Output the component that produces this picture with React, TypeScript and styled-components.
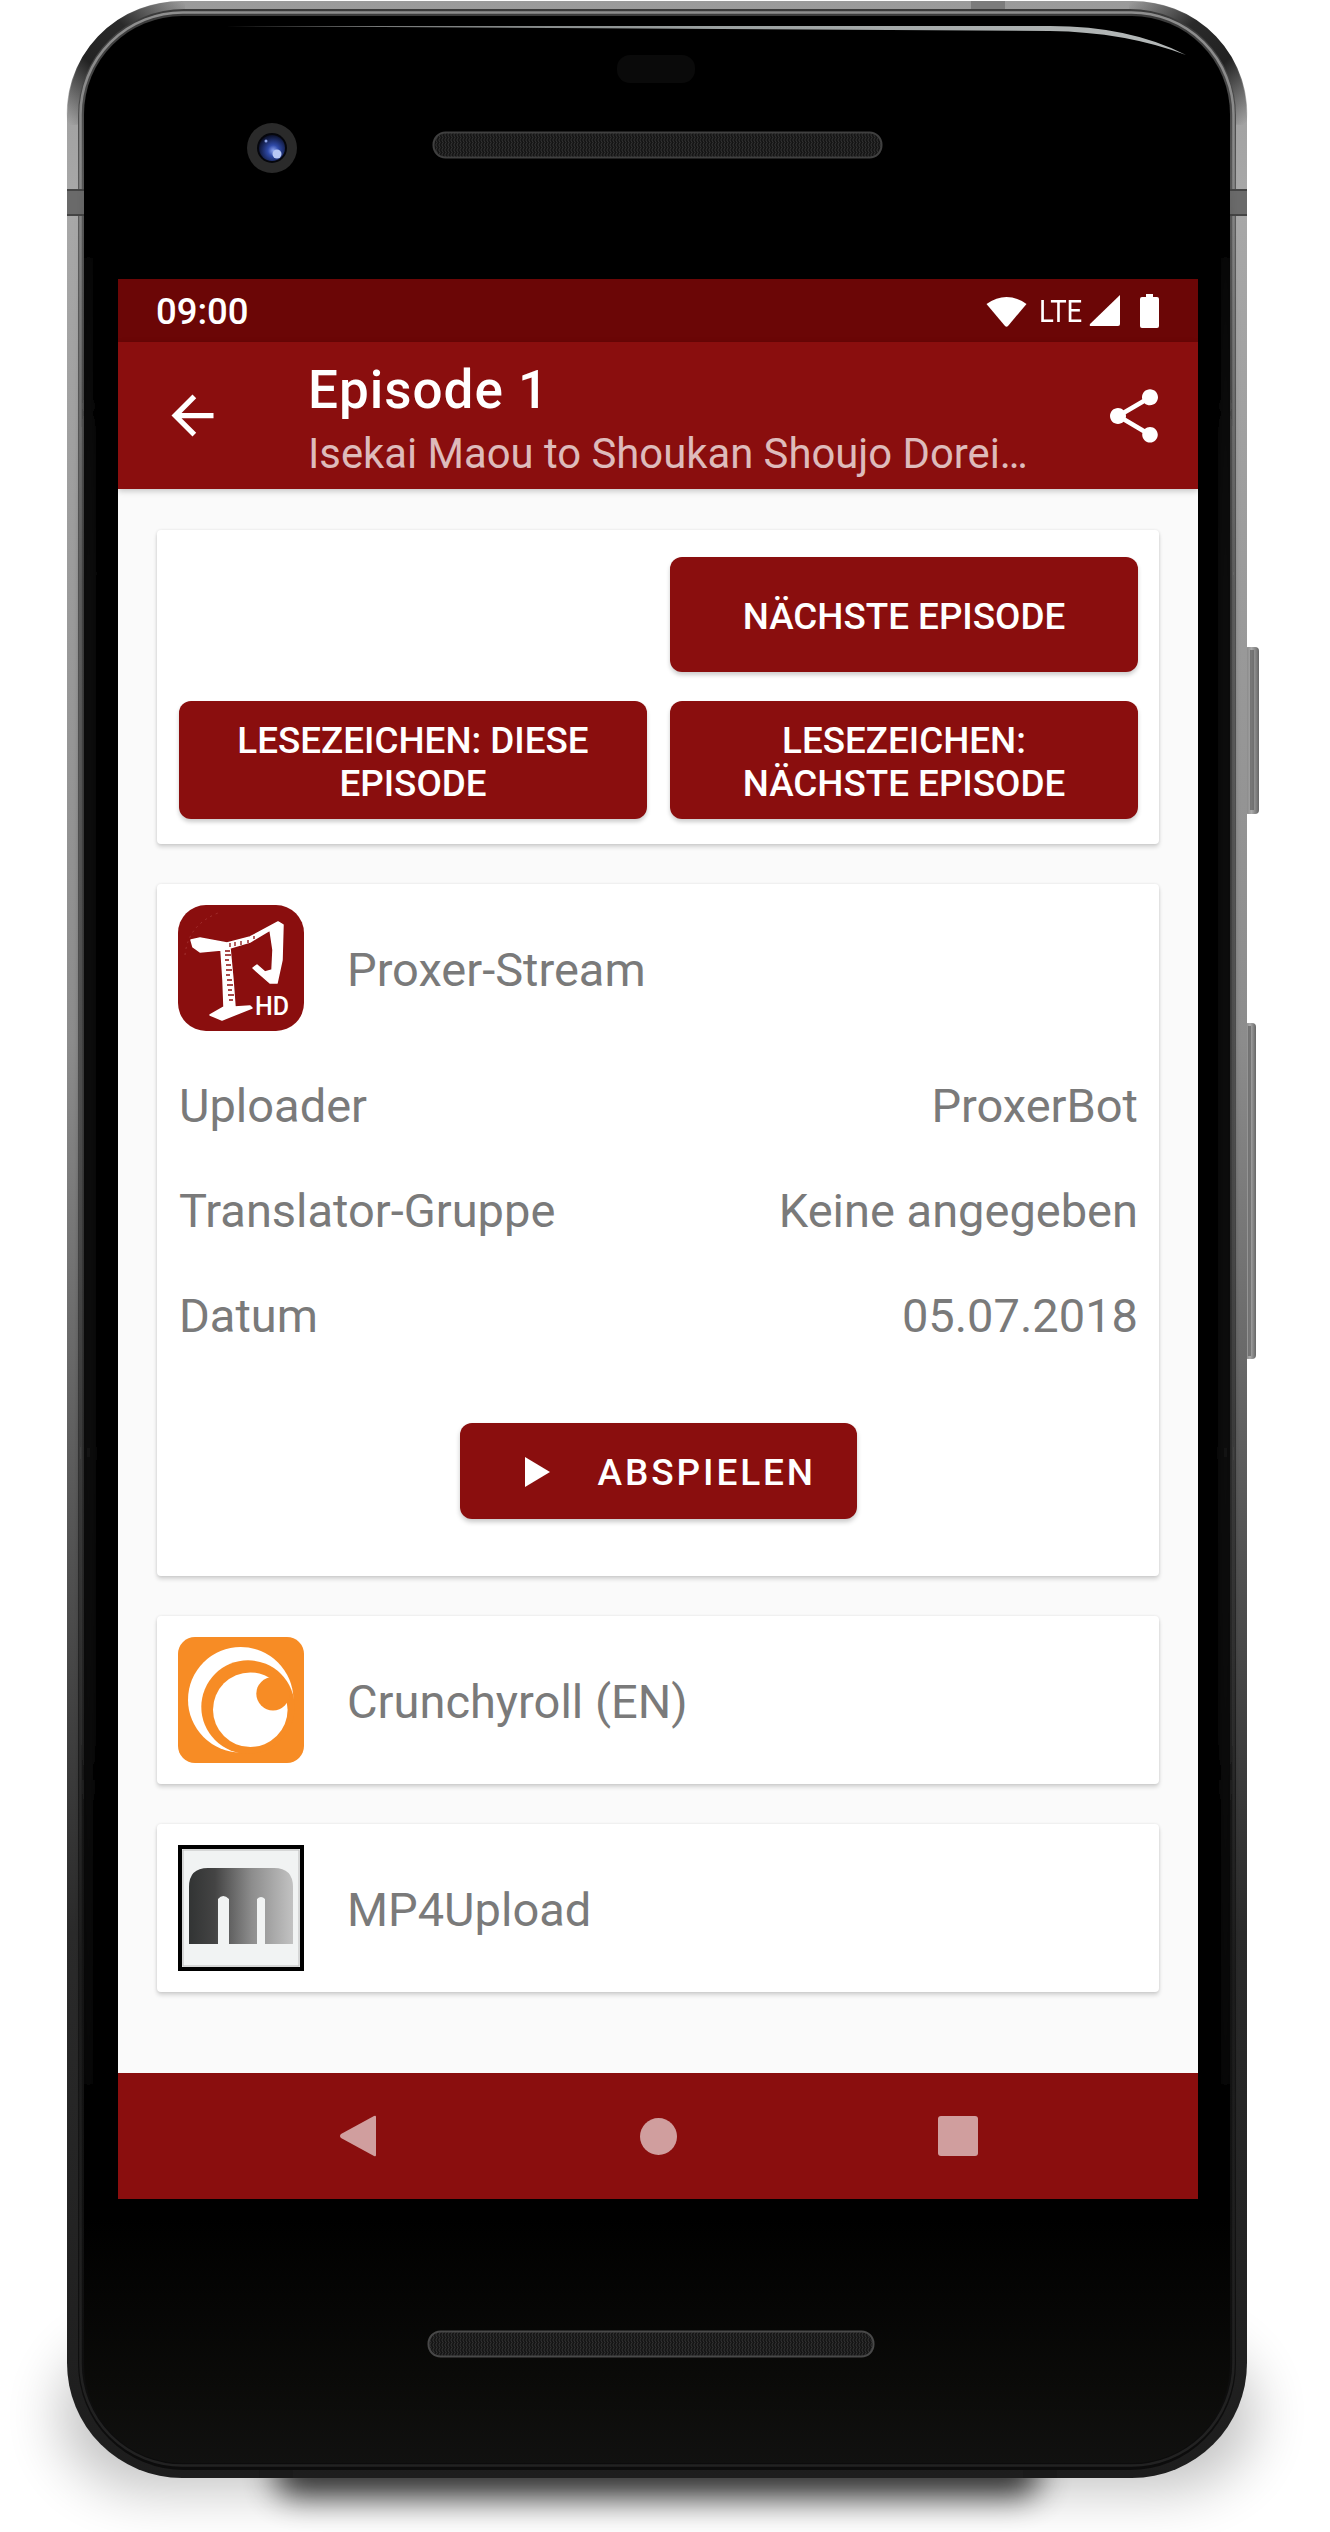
import React from "react";
import styled, { createGlobalStyle } from "styled-components";

const GlobalStyle = createGlobalStyle`
  html, body { margin: 0; padding: 0; background: #fff; }
  * { box-sizing: border-box; }
`;

const PRIMARY = "#8a0e0e";
const DARK = "#6b0606";
const GREY = "#7a7a7a";

const Page = styled.div`
  position: relative;
  width: 1330px;
  height: 2532px;
  padding: 279px 132px 333px 118px;
  overflow: hidden;
  font-family: Roboto, "Liberation Sans", sans-serif;
`;

const HardwareArt = styled.svg`
  position: absolute;
  inset: 0;
  width: 1330px;
  height: 2532px;
`;

const Screen = styled.main`
  position: relative;
  width: 1080px;
  height: 1920px;
  display: flex;
  flex-direction: column;
  background: #fafafa;
`;

const StatusBar = styled.div`
  height: 63px;
  flex: none;
  display: flex;
  align-items: center;
  justify-content: space-between;
  padding: 0 39px 0 38px;
  background: ${DARK};
  color: #fff;
`;

const Clock = styled.span`
  font-size: 36.5px;
  font-weight: 500;
  line-height: 42px;
  margin-top: 2px;
`;

const StatusIcons = styled.div`
  display: flex;
  align-items: center;
  height: 63px;
`;

const Lte = styled.span`
  display: inline-block;
  width: 42px;
  margin: 0 8px 0 12px;
  font-size: 32px;
  line-height: 36px;
  font-weight: 400;
  white-space: nowrap;
  transform: scaleX(0.86);
  transform-origin: left center;
`;

const Toolbar = styled.header`
  position: relative;
  height: 147px;
  flex: none;
  display: flex;
  align-items: center;
  padding: 0 32px 0 43px;
  background: ${PRIMARY};
  color: #fff;
  box-shadow: 0 2px 6px rgba(0, 0, 0, 0.22);
`;

const ToolbarText = styled.div`
  flex: 1;
  align-self: flex-start;
  min-width: 0;
  padding-top: 18px;
  margin-left: 84px;
`;

const Title = styled.div`
  font-size: 53px;
  line-height: 60px;
  font-weight: 500;
  letter-spacing: 1px;
`;

const Subtitle = styled.div`
  margin-top: 10px;
  font-size: 41.8px;
  line-height: 48px;
  color: rgba(255, 255, 255, 0.72);
  white-space: nowrap;
`;

const Content = styled.div`
  flex: 1;
  display: flex;
  flex-direction: column;
  gap: 40px;
  padding: 41px 39px 0;
`;

const Card = styled.section`
  background: #fff;
  border-radius: 4px;
  box-shadow: 0 3px 4px rgba(0, 0, 0, 0.16), 0 0 3px rgba(0, 0, 0, 0.09);
`;

const ActionsCard = styled(Card)`
  display: grid;
  grid-template-columns: 468px 468px;
  grid-template-rows: 115px 118px;
  column-gap: 23px;
  row-gap: 29px;
  padding: 27px 21px 25px 22px;
`;

const ActionButton = styled.button<{ $col?: number }>`
  grid-column: ${(p) => p.$col ?? "auto"};
  border: 0;
  margin: 0;
  padding: 4px 30px 0;
  border-radius: 12px;
  background: ${PRIMARY};
  color: #fff;
  font-family: inherit;
  font-size: 36.8px;
  font-weight: 500;
  line-height: 43.5px;
  box-shadow: 0 3px 4px rgba(0, 0, 0, 0.2);
`;

const SourceHeader = styled.div`
  display: flex;
  align-items: center;
  gap: 43px;
  padding: 21px;
`;

const SourceName = styled.span`
  margin-top: 3px;
  font-size: 47px;
  line-height: 56px;
  color: ${GREY};
`;

const LogoArt = styled.svg`
  width: 126px;
  height: 126px;
  flex: none;
  display: block;
`;

const DetailList = styled.dl`
  margin: 1px 0 0;
  padding: 0 21px 0 22px;
`;

const DetailRow = styled.div`
  height: 105px;
  display: flex;
  align-items: center;
  justify-content: space-between;
  font-size: 47px;
  color: ${GREY};
`;

const DetailTerm = styled.dt`
  margin: 0;
`;

const DetailValue = styled.dd`
  margin: 0;
`;

const PlayButton = styled.button`
  display: flex;
  align-items: center;
  gap: 48px;
  width: 397px;
  height: 96px;
  margin: 55px auto 57px;
  padding: 2px 0 0 65px;
  border: 0;
  border-radius: 12px;
  background: ${PRIMARY};
  color: #fff;
  font-family: inherit;
  font-size: 37px;
  font-weight: 500;
  letter-spacing: 2.9px;
  box-shadow: 0 3px 5px rgba(0, 0, 0, 0.22);
`;

const NavBar = styled.nav`
  height: 126px;
  flex: none;
  display: grid;
  grid-template-columns: repeat(3, 300px);
  justify-content: center;
  align-items: center;
  background: ${PRIMARY};
`;

const NavIcon = styled.svg`
  justify-self: center;
  display: block;
  fill: rgba(255, 255, 255, 0.6);
`;

const ToolIcon = styled.svg<{ $gap?: number }>`
  flex: none;
  display: block;
  fill: #fff;
  margin-left: ${(p) => p.$gap ?? 0}px;
`;

function Frame() {
  return (
    <HardwareArt viewBox="0 0 1330 2532" aria-hidden="true">
      <defs>
        <filter id="b30" x="-30%" y="-200%" width="160%" height="500%"><feGaussianBlur stdDeviation="28" /></filter>
        <filter id="b12" x="-30%" y="-200%" width="160%" height="500%"><feGaussianBlur stdDeviation="16" /></filter>
        <filter id="b6" x="-200%" y="-5%" width="500%" height="110%"><feGaussianBlur stdDeviation="5" /></filter>
        <linearGradient id="metal" x1="0" y1="0" x2="0" y2="1">
          <stop offset="0" stopColor="#9a9a9a" />
          <stop offset="0.08" stopColor="#a8a8a8" />
          <stop offset="0.42" stopColor="#8c8c8c" />
          <stop offset="0.6" stopColor="#5a5a5a" />
          <stop offset="0.78" stopColor="#2a2a2a" />
          <stop offset="1" stopColor="#1d1d1d" />
        </linearGradient>
        <linearGradient id="band" x1="0" y1="0" x2="0" y2="1">
          <stop offset="0" stopColor="#3a3a3a" />
          <stop offset="0.08" stopColor="#5c5c5c" />
          <stop offset="0.45" stopColor="#555" />
          <stop offset="0.72" stopColor="#1c1c1c" />
          <stop offset="1" stopColor="#0c0c0c" />
        </linearGradient>
        <linearGradient id="thin" x1="0" y1="0" x2="0" y2="1">
          <stop offset="0" stopColor="#8e8e8e" />
          <stop offset="0.5" stopColor="#5c5c5c" />
          <stop offset="0.8" stopColor="#1e1e1e" />
          <stop offset="1" stopColor="#222" />
        </linearGradient>
        <linearGradient id="inner" x1="0" y1="0" x2="0" y2="1">
          <stop offset="0" stopColor="#000" />
          <stop offset="0.9" stopColor="#000" />
          <stop offset="0.97" stopColor="#0b0b09" />
          <stop offset="1" stopColor="#111110" />
        </linearGradient>
        <linearGradient id="sideGlow" x1="0" y1="0" x2="0" y2="1">
          <stop offset="0" stopColor="#191919" stopOpacity="0" />
          <stop offset="0.2" stopColor="#191919" />
          <stop offset="0.6" stopColor="#191919" />
          <stop offset="1" stopColor="#191919" stopOpacity="0" />
        </linearGradient>
        <linearGradient id="hl" x1="0" y1="0" x2="1" y2="0">
          <stop offset="0" stopColor="#666" />
          <stop offset="0.5" stopColor="#9aa0a0" />
          <stop offset="1" stopColor="#b5b9b9" />
        </linearGradient>
        <linearGradient id="cornerL" gradientUnits="userSpaceOnUse" x1="70" y1="125" x2="185" y2="3">
          <stop offset="0" stopColor="#222" stopOpacity="0" />
          <stop offset="0.35" stopColor="#222" />
          <stop offset="0.65" stopColor="#2a2a2a" />
          <stop offset="1" stopColor="#2a2a2a" stopOpacity="0" />
        </linearGradient>
        <linearGradient id="cornerR" gradientUnits="userSpaceOnUse" x1="1244" y1="125" x2="1129" y2="3">
          <stop offset="0" stopColor="#222" stopOpacity="0" />
          <stop offset="0.35" stopColor="#222" />
          <stop offset="0.65" stopColor="#2a2a2a" />
          <stop offset="1" stopColor="#2a2a2a" stopOpacity="0" />
        </linearGradient>
        <linearGradient id="key" x1="0" y1="0" x2="1" y2="0">
          <stop offset="0" stopColor="#777" />
          <stop offset="0.5" stopColor="#aaa" />
          <stop offset="1" stopColor="#666" />
        </linearGradient>
        <pattern id="mesh" width="3" height="5" patternUnits="userSpaceOnUse">
          <rect width="3" height="5" fill="#151515" />
          <path d="M0.8 0 L2.2 2.5 L0.8 5" fill="none" stroke="#383838" strokeWidth="0.9" />
        </pattern>
        <radialGradient id="lens" cx="0.55" cy="0.6" r="0.6">
          <stop offset="0" stopColor="#8fa6f0" />
          <stop offset="0.35" stopColor="#2f4aa8" />
          <stop offset="1" stopColor="#0a0f28" />
        </radialGradient>
      </defs>

      {/* drop shadow */}
      <rect x="60" y="2340" width="1194" height="150" rx="90" fill="#000" opacity="0.24" filter="url(#b30)" />
      <rect x="275" y="2450" width="764" height="46" rx="20" fill="#000" opacity="0.8" filter="url(#b12)" />

      {/* side keys */}
      <rect x="1244" y="647" width="15" height="167" rx="4" fill="url(#key)" />
      <rect x="1250" y="650" width="4" height="160" fill="#555" opacity="0.6" />
      <rect x="1244" y="1023" width="12" height="336" rx="4" fill="url(#key)" />
      <rect x="1248" y="1026" width="3" height="330" fill="#555" opacity="0.6" />

      {/* body */}
      <rect x="67" y="1" width="1180" height="2477" rx="115" fill="url(#metal)" />
      <path d="M73 125 A108 108 0 0 1 185 7" fill="none" stroke="url(#cornerL)" strokeWidth="12" />
      <path d="M1241 125 A108 108 0 0 0 1129 7" fill="none" stroke="url(#cornerR)" strokeWidth="12" />

      {/* antenna bands */}
      <rect x="971" y="1" width="34" height="9" fill="#7c7c7c" />
      <rect x="259" y="2466" width="34" height="12" fill="#1a1a1a" />
      <rect x="1023" y="2466" width="34" height="12" fill="#1a1a1a" />

      <rect x="78" y="9" width="1158" height="2461" rx="106" fill="url(#band)" />
      <rect x="80.5" y="12.5" width="1153" height="2453" rx="102" fill="none" stroke="url(#thin)" strokeWidth="2.5" />

      {/* side antenna lines sit on the rim */}
      <rect x="67" y="189" width="17" height="27" fill="#6a6a6a" />
      <rect x="67" y="189" width="17" height="2" fill="#444" />
      <rect x="67" y="214" width="17" height="2" fill="#444" />
      <rect x="1230" y="189" width="17" height="27" fill="#6a6a6a" />
      <rect x="1230" y="189" width="17" height="2" fill="#444" />
      <rect x="1230" y="214" width="17" height="2" fill="#444" />

      <rect x="84" y="16" width="1146" height="2447" rx="98" fill="url(#inner)" />

      {/* inner glow at the sides */}
      <rect x="84" y="160" width="9" height="2120" fill="url(#sideGlow)" filter="url(#b6)" />
      <rect x="1221" y="160" width="9" height="2120" fill="url(#sideGlow)" filter="url(#b6)" />

      {/* glass highlight */}
      <path d="M225 26 L1050 26 Q1130 26 1186 55 Q1125 32 1050 31 Z" fill="url(#hl)" />

      {/* proximity sensor */}
      <rect x="617" y="55" width="78" height="28" rx="13" fill="#0a0a0a" />

      {/* camera */}
      <circle cx="272" cy="148" r="25" fill="#2a2a2a" />
      <circle cx="272" cy="148" r="15" fill="#05060c" />
      <circle cx="272" cy="148" r="13" fill="url(#lens)" />
      <circle cx="277" cy="154" r="4.5" fill="#b8c8f5" />
      <circle cx="266" cy="141" r="1.5" fill="#8ea4e6" />

      {/* speakers */}
      <rect x="433.5" y="132.5" width="448" height="25" rx="12" fill="url(#mesh)" stroke="#3f3f3f" strokeWidth="2" />
      <rect x="428.5" y="2331.5" width="445" height="25" rx="12" fill="url(#mesh)" stroke="#484848" strokeWidth="2" />
    </HardwareArt>
  );
}

const ProxerLogo = () => (
  <LogoArt viewBox="0 0 126 126">
    <rect width="126" height="126" rx="28" fill="#8a0e0e" />
    <polygon
      points="13,35 22,33 49,38 72,32 100,17 105,20 104,55 99,78 92,78 75,63 79,60 87,67 94,65 95,45 92,25 72,37 52,43 55,75 57,102 72,101 74,103 44,115 32,110 46,102 45,75 43,45 22,47 15,42"
      fill="#fff"
      stroke="#fff"
      strokeWidth="1.5"
      strokeLinejoin="round"
    />
    <g stroke="#8a0e0e" strokeWidth="1.3" fill="none">
      <path d="M47 46h5M47 50h6M47 55h4M48 60h5M48 65h6M48 70h4M49 75h5M49 80h6M50 85h4M50 90h6M51 95h4" />
      <path d="M52 38v4M57 37v4M63 36v4M70 35v3M76 31v3" />
    </g>
    <g fill="none" stroke="#a83a3a" strokeWidth="1" strokeDasharray="2 4" opacity="0.8">
      <path d="M7 50 Q10 20 40 8" />
    </g>
    <text x="77" y="110" fontFamily="Roboto, sans-serif" fontWeight="500" fontSize="25" fill="#fff">HD</text>
  </LogoArt>
);

const CrunchyrollLogo = () => (
  <LogoArt viewBox="0 0 126 126">
    <rect width="126" height="126" rx="17" fill="#f78c25" />
    <circle cx="62.7" cy="62.7" r="52.7" fill="#fff" />
    <circle cx="70" cy="70" r="46.7" fill="#f78c25" />
    <circle cx="72.3" cy="72.7" r="37.3" fill="#fff" />
    <circle cx="95" cy="56.7" r="16.7" fill="#f78c25" />
  </LogoArt>
);

const Mp4Logo = () => (
  <LogoArt viewBox="0 0 126 126">
    <defs>
      <linearGradient id="mgrad" x1="0" y1="0" x2="1" y2="0">
        <stop offset="0" stopColor="#323434" />
        <stop offset="0.25" stopColor="#444" />
        <stop offset="0.6" stopColor="#8c8c8c" />
        <stop offset="1" stopColor="#c2c2c2" />
      </linearGradient>
    </defs>
    <rect x="2" y="2" width="122" height="122" fill="#f1f3f3" stroke="#000" strokeWidth="4" />
    <rect x="5" y="5" width="116" height="116" fill="none" stroke="#bbb" strokeWidth="1" />
    <path
      d="M11 99 V42 Q11 23 30 23 H96 Q115 23 115 42 V99 H87 V54 Q83 50 79 54 V99 H51 V54 Q45 48 40 54 V99 Z"
      fill="url(#mgrad)"
    />
  </LogoArt>
);

const details: [string, string][] = [
  ["Uploader", "ProxerBot"],
  ["Translator-Gruppe", "Keine angegeben"],
  ["Datum", "05.07.2018"],
];

export default function App() {
  return (
    <Page>
      <GlobalStyle />
      <Frame />
      <Screen>
        <StatusBar>
          <Clock>09:00</Clock>
          <StatusIcons>
            <ToolIcon width="41" height="32" viewBox="0 0 41 32">
              <path d="M0.5 9 Q20.5 -5 40.5 9 L22 31 Q20.5 32.5 19 31 Z" />
            </ToolIcon>
            <Lte>LTE</Lte>
            <ToolIcon width="31" height="31" viewBox="0 0 31 31">
              <path d="M31 0 V29 Q31 31 29 31 H2 Q0 31 1 29 Z" />
            </ToolIcon>
            <ToolIcon $gap={20} width="19" height="34" viewBox="0 0 19 34">
              <path d="M6 0 H13 V3 H17 Q19 3 19 5 V32 Q19 34 17 34 H2 Q0 34 0 32 V5 Q0 3 2 3 H6 Z" />
            </ToolIcon>
          </StatusIcons>
        </StatusBar>
        <Toolbar>
          <ToolIcon width="63" height="63" viewBox="0 0 24 24">
            <path d="M20 11H7.83l5.59-5.59L12 4l-8 8 8 8 1.41-1.41L7.83 13H20v-2z" />
          </ToolIcon>
          <ToolbarText>
            <Title>Episode 1</Title>
            <Subtitle>Isekai Maou to Shoukan Shoujo Dorei…</Subtitle>
          </ToolbarText>
          <ToolIcon width="64" height="64" viewBox="0 0 24 24">
            <path d="M18 16.08c-.76 0-1.44.3-1.96.77L8.91 12.7c.05-.23.09-.46.09-.7s-.04-.47-.09-.7l7.05-4.11c.54.5 1.25.81 2.04.81 1.66 0 3-1.34 3-3s-1.34-3-3-3-3 1.34-3 3c0 .24.04.47.09.7L8.04 9.81C7.5 9.31 6.79 9 6 9c-1.66 0-3 1.34-3 3s1.34 3 3 3c.79 0 1.5-.31 2.04-.81l7.12 4.16c-.05.21-.08.43-.08.65 0 1.61 1.31 2.92 2.92 2.92 1.61 0 2.92-1.31 2.92-2.92s-1.31-2.92-2.92-2.92z" />
          </ToolIcon>
        </Toolbar>
        <Content>
          <ActionsCard>
            <ActionButton $col={2}>NÄCHSTE EPISODE</ActionButton>
            <ActionButton>LESEZEICHEN: DIESE EPISODE</ActionButton>
            <ActionButton>LESEZEICHEN: NÄCHSTE EPISODE</ActionButton>
          </ActionsCard>
          <Card>
            <SourceHeader>
              <ProxerLogo />
              <SourceName>Proxer-Stream</SourceName>
            </SourceHeader>
            <DetailList>
              {details.map(([term, value]) => (
                <DetailRow key={term}>
                  <DetailTerm>{term}</DetailTerm>
                  <DetailValue>{value}</DetailValue>
                </DetailRow>
              ))}
            </DetailList>
            <PlayButton>
              <ToolIcon width="25" height="30" viewBox="0 0 25 30">
                <path d="M0 0 L25 15 L0 30 Z" />
              </ToolIcon>
              ABSPIELEN
            </PlayButton>
          </Card>
          <Card>
            <SourceHeader>
              <CrunchyrollLogo />
              <SourceName>Crunchyroll (EN)</SourceName>
            </SourceHeader>
          </Card>
          <Card>
            <SourceHeader>
              <Mp4Logo />
              <SourceName>MP4Upload</SourceName>
            </SourceHeader>
          </Card>
        </Content>
        <NavBar>
          <NavIcon width="36" height="42" viewBox="0 0 36 42">
            <path d="M36 2 V40 Q36 42 34 41 L1 23 Q-1 21 1 19 L34 1 Q36 0 36 2 Z" />
          </NavIcon>
          <NavIcon width="37" height="37" viewBox="0 0 37 37">
            <circle cx="18.5" cy="18.5" r="18.5" />
          </NavIcon>
          <NavIcon width="40" height="40" viewBox="0 0 40 40">
            <rect width="40" height="40" rx="3" />
          </NavIcon>
        </NavBar>
      </Screen>
    </Page>
  );
}
